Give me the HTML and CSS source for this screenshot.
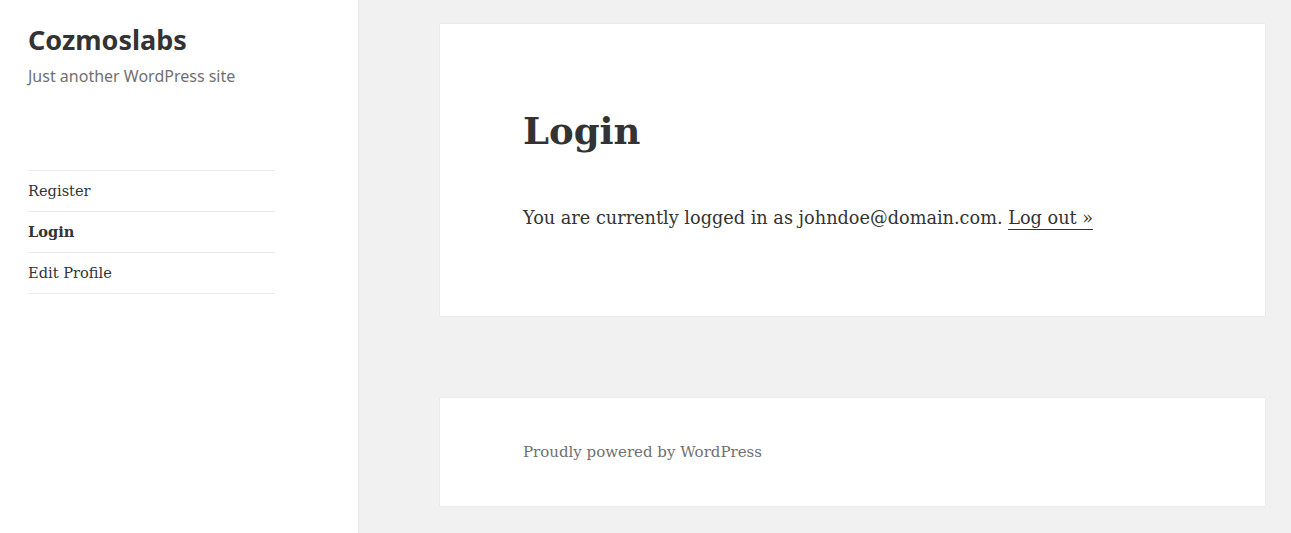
FILE: index.html
```html
<!DOCTYPE html>
<html lang="en">

<head>
  <meta charset="UTF-8" />
  <title>Login – Cozmoslabs</title>
  <link rel="stylesheet" href="styles.css">
</head>

<body>
  <div class="site">
    <div class="sidebar">
      <header class="site-header">
        <p class="site-title"><a href="#">Cozmoslabs</a></p>
        <p class="site-description">Just another WordPress site</p>
      </header>

      <nav class="main-navigation">
        <ul class="nav-menu">
          <li><a href="#">Register</a></li>
          <li class="current"><a href="#">Login</a></li>
          <li><a href="#">Edit Profile</a></li>
        </ul>
      </nav>
    </div>

    <div class="content">
      <article class="hentry">
        <h1 class="entry-title">Login</h1>
        <div class="entry-content">
          <p>You are currently logged in as johndoe@domain.com. <a href="#" class="logout">Log out »</a></p>
        </div>
      </article>

      <footer class="site-footer">
        <a href="#">Proudly powered by WordPress</a>
      </footer>
    </div>
  </div>
</body>

</html>
```

FILE: styles.css
```css
html,
body {
  margin: 0;
  padding: 0;
  height: 100%;
}

body {
  background-color: #f1f1f1;
  color: #333;
  font-family: "DejaVu Serif", "Liberation Serif", serif;
  font-size: 16px;
  line-height: 1.5;
}

a {
  color: #333;
  text-decoration: none;
}

.site {
  display: flex;
  min-height: 100%;
}

/* sidebar */
.sidebar {
  width: 358px;
  flex-shrink: 0;
  background-color: #fff;
  border-right: 1px solid #e6e6e6;
}

.site-header {
  padding: 22px 28px 0;
}

.site-title {
  margin: 0;
  font-family: "Noto Sans", sans-serif;
  font-weight: 700;
  font-size: 27px;
  line-height: 36px;
}

.site-description {
  margin: 6px 0 0;
  font-family: "Noto Sans", sans-serif;
  font-size: 16px;
  line-height: 24px;
  color: #707070;
}

.main-navigation {
  margin: 82px 0 0 28px;
  width: 247px;
}

.nav-menu {
  list-style: none;
  margin: 0;
  padding: 0;
  border-top: 1px solid #eaeaea;
}

.nav-menu li {
  border-bottom: 1px solid #eaeaea;
}

.nav-menu a {
  display: block;
  padding: 8px 0;
  font-size: 14.6px;
  line-height: 24px;
}

.nav-menu .current a {
  font-weight: 700;
}

/* content */
.content {
  flex: 1;
  padding: 24px 26px 27px 81px;
}

.hentry,
.site-footer {
  background-color: #fff;
  box-shadow: 0 0 1px rgba(0, 0, 0, 0.15);
}

.hentry {
  padding: 85px 83px 83px;
}

.entry-title {
  margin: 0 0 50px;
  font-size: 37px;
  line-height: 1.2;
  font-weight: 700;
}

.entry-content p {
  margin: 0;
  font-size: 17.7px;
  line-height: 30px;
}

.logout {
  padding-bottom: 1px;
  border-bottom: 1px solid #333;
}

.site-footer {
  margin-top: 82px;
  padding: 40px 83px;
  font-size: 15px;
  line-height: 28px;
}

.site-footer a {
  color: #707070;
}
```
